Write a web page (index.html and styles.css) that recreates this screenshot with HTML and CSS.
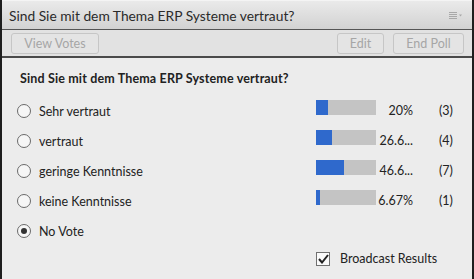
FILE: index.html
```html
<!DOCTYPE html>
<html lang="de">
<head>
    <meta charset="UTF-8">
    <title>Umfrage</title>
    <link rel="stylesheet" href="styles.css">
</head>
<body>
    <div class="pod">
        <div class="pod-header">
            <span class="pod-title">Sind Sie mit dem Thema ERP Systeme vertraut?</span>
            <span class="pod-menu">
                <svg width="14" height="8" viewBox="0 0 14 8">
                    <path d="M0 0.5h8M0 2.5h8M0 4.5h8M0 6.5h8" stroke="#a8a8a8" stroke-width="1"/>
                    <path d="M10 2.5h3l-1.5 2z" fill="#a8a8a8"/>
                </svg>
            </span>
        </div>

        <div class="toolbar">
            <button class="btn">View Votes</button>
            <div class="spacer"></div>
            <button class="btn btn-edit">Edit</button>
            <button class="btn btn-end">End Poll</button>
        </div>

        <div class="content">
            <div class="question">Sind Sie mit dem Thema ERP Systeme vertraut?</div>

            <div class="answers">
                <div class="answer">
                    <span class="radio"></span>
                    <span class="answer-label">Sehr vertraut</span>
                    <div class="bar"><div class="bar-fill" style="width: 20%"></div></div>
                    <span class="percent">20%</span>
                    <span class="count">(3)</span>
                </div>
                <div class="answer">
                    <span class="radio"></span>
                    <span class="answer-label">vertraut</span>
                    <div class="bar"><div class="bar-fill" style="width: 26.67%"></div></div>
                    <span class="percent">26.6...</span>
                    <span class="count">(4)</span>
                </div>
                <div class="answer">
                    <span class="radio"></span>
                    <span class="answer-label">geringe Kenntnisse</span>
                    <div class="bar"><div class="bar-fill" style="width: 46.67%"></div></div>
                    <span class="percent">46.6...</span>
                    <span class="count">(7)</span>
                </div>
                <div class="answer">
                    <span class="radio"></span>
                    <span class="answer-label">keine Kenntnisse</span>
                    <div class="bar"><div class="bar-fill" style="width: 6.67%"></div></div>
                    <span class="percent">6.67%</span>
                    <span class="count">(1)</span>
                </div>
                <div class="answer">
                    <span class="radio checked"></span>
                    <span class="answer-label">No Vote</span>
                </div>
            </div>

            <div class="broadcast">
                <span class="checkbox">
                    <svg width="11" height="10" viewBox="0 0 11 10">
                        <path d="M1 5l3 3.5L10 1" fill="none" stroke="#222" stroke-width="2"/>
                    </svg>
                </span>
                <span class="broadcast-label">Broadcast Results</span>
            </div>
        </div>
    </div>
</body>
</html>
```

FILE: styles.css
```css
/* Grundlayout */
body {
    margin: 0;
    overflow: hidden;
    font-family: Lato, "Open Sans", sans-serif;
    background-color: #ececec;
    color: #222;
}

/* Fenster (Pod) */
.pod {
    height: 279px;
    border-left: 2px solid #1e1e1e;
    border-right: 2px solid #1e1e1e;
    box-sizing: border-box;
    background: #ececec;
}

/* Kopfzeile */
.pod-header {
    height: 30px;
    box-sizing: border-box;
    display: flex;
    align-items: center;
    padding: 0 9px 0 7px;
    background: linear-gradient(#eaeaea, #d2d2d2);
    border-top: 1px solid #f4f4f4;
    border-bottom: 1px solid #555;
}

.pod-title {
    flex: 1;
    font-size: 13.8px;
    color: #2a2a2a;
}

.pod-menu {
    display: flex;
    margin-top: 1px;
}

/* Werkzeugleiste */
.toolbar {
    height: 28px;
    box-sizing: border-box;
    display: flex;
    align-items: center;
    gap: 9px;
    padding: 0 8px 0 9px;
    background: #e2e2e2;
    border-bottom: 2px solid #4a4a4a;
}

.spacer {
    flex: 1;
}

.btn {
    height: 21px;
    padding: 0 6px;
    font-family: inherit;
    font-size: 12.5px;
    color: #a6a6a6;
    background: #e4e4e4;
    border: 1px solid #c6c6c6;
    border-radius: 3px;
}

.btn:first-child {
    width: 88px;
}

.btn-edit {
    width: 47px;
}

.btn-end {
    width: 71px;
}

/* Inhalt */
.content {
    padding: 13px 0 0 15px;
}

.question {
    font-size: 12.5px;
    font-weight: bold;
    color: #222;
    margin: 0 0 10px 3px;
    letter-spacing: 0.15px;
}

.answer {
    display: flex;
    align-items: center;
    height: 30px;
    font-size: 12.5px;
}

.radio {
    width: 12px;
    height: 12px;
    border: 1px solid #6a6a6a;
    border-radius: 50%;
    background: #f6f6f6;
    margin-right: 8px;
    position: relative;
}

.radio.checked::after {
    content: "";
    position: absolute;
    left: 3px;
    top: 3px;
    width: 6px;
    height: 6px;
    border-radius: 50%;
    background: #333;
}

.answer-label {
    width: 277px;
}

.bar {
    width: 60px;
    height: 15px;
    background: #c4c4c4;
    margin-top: -7px;
}

.bar-fill {
    height: 100%;
    background: #2f69cc;
}

.percent {
    width: 37px;
    text-align: right;
    margin-top: -1px;
}

.count {
    margin-left: 26px;
    margin-top: -1px;
}

/* Ergebnisse senden */
.broadcast {
    display: flex;
    align-items: center;
    margin: 5px 0 0 299px;
    font-size: 12.5px;
}

.checkbox {
    width: 12px;
    height: 12px;
    border: 1px solid #707070;
    background: #fafafa;
    display: flex;
    align-items: center;
    justify-content: center;
    margin-right: 10px;
}
```
